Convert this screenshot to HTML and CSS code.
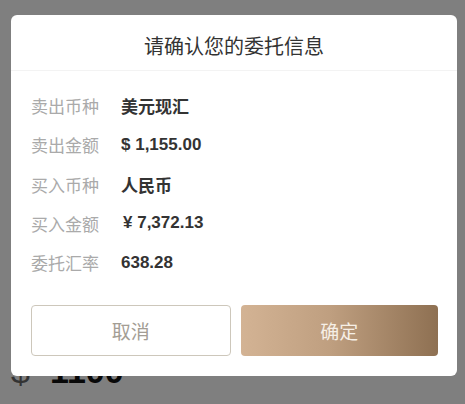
FILE: index.html
```html
<!DOCTYPE html>
<html lang="zh">
<head>
<meta charset="utf-8">
<link rel="stylesheet" href="styles.css">
</head>
<body>
<div class="page">
  <div class="amount"><span class="cur">$</span><span class="num">1100</span></div>
</div>
<div class="mask"></div>
<div class="dialog">
  <div class="title">请确认您的委托信息</div>
  <div class="info">
    <div class="label">卖出币种</div><div class="value">美元现汇</div>
    <div class="label">卖出金额</div><div class="value">$ 1,155.00</div>
    <div class="label">买入币种</div><div class="value">人民币</div>
    <div class="label">买入金额</div><div class="value yen">¥ 7,372.13</div>
    <div class="label">委托汇率</div><div class="value">638.28</div>
  </div>
  <div class="actions">
    <div class="btn cancel">取消</div>
    <div class="btn ok">确定</div>
  </div>
</div>
</body>
</html>
```
FILE: styles.css
```css
html, body {
  margin: 0;
  padding: 0;
}
body {
  width: 465px;
  height: 404px;
  overflow: hidden;
  background: #fff;
  font-family: "Noto Sans CJK SC", "Noto Sans", sans-serif;
  position: relative;
}
.page {
  height: 404px;
  padding-top: 351px;
  padding-left: 11px;
  box-sizing: border-box;
}
.amount {
  font-family: "Liberation Sans", sans-serif;
  font-size: 34px;
  line-height: 40px;
  display: flex;
  gap: 20px;
}
.amount .cur {
  font-weight: 300;
  color: #666;
}
.amount .num {
  color: #111;
  font-weight: bold;
}
.mask {
  position: absolute;
  inset: 0;
  background: rgba(0, 0, 0, 0.5);
}
.dialog {
  position: absolute;
  left: 11px;
  top: 15px;
  width: 446px;
  height: 361px;
  background: #fff;
  border-radius: 6px;
  box-sizing: border-box;
  display: flex;
  flex-direction: column;
}
.title {
  height: 56px;
  box-sizing: border-box;
  padding-top: 5px;
  line-height: 51px;
  text-align: center;
  font-size: 20px;
  color: #333;
  border-bottom: 1px solid #f3f3f3;
}
.info {
  padding: 15px 20px 0 20px;
  display: grid;
  grid-template-columns: 69px 1fr;
  column-gap: 21px;
  grid-auto-rows: 39.25px;
  align-items: center;
}
.label {
  font-size: 17px;
  color: #aaa;
  white-space: nowrap;
}
.value {
  font-family: "Liberation Sans", "Noto Sans CJK SC", sans-serif;
  font-size: 17px;
  font-weight: bold;
  color: #333;
  white-space: nowrap;
}
.value.yen {
  padding-left: 2px;
}
.actions {
  margin-top: 23px;
  padding: 0 19px 0 20px;
  display: flex;
  gap: 10px;
}
.btn {
  flex: 1;
  height: 51px;
  border-radius: 4px;
  box-sizing: border-box;
  display: flex;
  align-items: center;
  justify-content: center;
  font-size: 19px;
}
.cancel {
  border: 1px solid #cdc7bb;
  color: #a39d94;
  background: #fff;
}
.ok {
  background: linear-gradient(90deg, #d3b394 0%, #bf9f80 45%, #8e7052 100%);
  color: #f6efe6;
}
```
